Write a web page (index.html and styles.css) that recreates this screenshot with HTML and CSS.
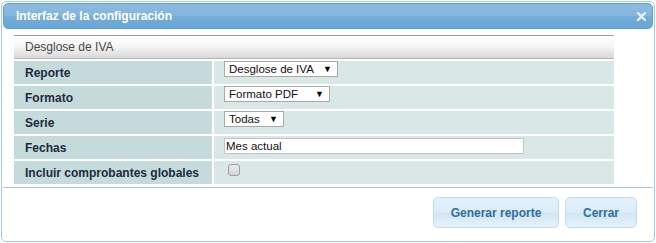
FILE: index.html
```html
<!DOCTYPE html>
<html>
<head>
    <title>Interfaz de la configuración</title>
    <link rel="stylesheet" href="styles.css">
</head>
<body>
    <div class="dialog">
        <div class="titlebar">
            <span class="title">Interfaz de la configuración</span>
            <span class="close" title="Cerrar">
                <svg width="9" height="9" viewBox="0 0 9 9">
                    <path d="M1 1 L8 8 M8 1 L1 8" stroke="#e9f0f6" stroke-width="2.4" stroke-linecap="square"/>
                </svg>
            </span>
        </div>

        <div class="content">
            <div class="form">
                <div class="form-head">Desglose de IVA</div>

                <div class="label">Reporte</div>
                <div class="value">
                    <div class="select w-reporte">
                        <select>
                            <option>Desglose de IVA</option>
                        </select>
                    </div>
                </div>

                <div class="label">Formato</div>
                <div class="value">
                    <div class="select w-formato">
                        <select>
                            <option>Formato PDF</option>
                            <option>Formato Excel</option>
                        </select>
                    </div>
                </div>

                <div class="label">Serie</div>
                <div class="value">
                    <div class="select w-serie">
                        <select>
                            <option>Todas</option>
                        </select>
                    </div>
                </div>

                <div class="label">Fechas</div>
                <div class="value">
                    <input class="text" type="text" value="Mes actual">
                </div>

                <div class="label">Incluir comprobantes globales</div>
                <div class="value">
                    <input class="check" type="checkbox">
                </div>
            </div>
        </div>

        <div class="buttonpane">
            <button class="btn-generar">Generar reporte</button>
            <button class="btn-cerrar">Cerrar</button>
        </div>
    </div>
</body>
</html>
```

FILE: styles.css
```css
body {
    margin: 0;
    font-family: "Liberation Sans", Arial, sans-serif;
    background: #ffffff;
}
.dialog {
    box-sizing: border-box;
    width: 654px;
    height: 241px;
    margin: 1px 0 0 1px;
    padding: 1px;
    border: 1px solid #a6c9e2;
    border-radius: 5px;
    background: #fff;
}
.titlebar {
    box-sizing: border-box;
    height: 26px;
    display: flex;
    align-items: center;
    justify-content: space-between;
    padding: 0 6px 0 12px;
    border: 1px solid #5a9fd6;
    border-radius: 5px;
    background: linear-gradient(#8dbbdf, #84b5dc 50%, #76acd8 52%, #6aa5d3);
    color: #fff;
    font-size: 12px;
    font-weight: bold;
}
.close {
    display: flex;
    width: 9px;
    height: 9px;
}
.content {
    padding: 6px 0 3px 11px;
}
.form {
    width: 600px;
    display: grid;
    grid-template-columns: 198px 1fr;
    gap: 2px;
}
.form-head {
    grid-column: 1 / 3;
    box-sizing: border-box;
    height: 24px;
    line-height: 22px;
    padding-left: 11px;
    border-top: 1px solid #9d9d9d;
    border-bottom: 1px solid #b4b4b4;
    background: linear-gradient(#ffffff, #f6f6f6 45%, #d9d9d9);
    color: #474747;
    font-size: 12px;
}
.label {
    height: 23px;
    line-height: 24px;
    padding-left: 11px;
    background: #c5dadb;
    color: #1e2a3c;
    font-size: 12px;
    font-weight: bold;
}
.value {
    height: 23px;
    padding-left: 10px;
    background: #d9e7e7;
}
.select {
    position: relative;
    box-sizing: border-box;
    height: 16px;
    border: 1px solid #a9a9a9;
    background: #fff;
}
.select select {
    appearance: none;
    display: block;
    width: 100%;
    height: 14px;
    line-height: 14px;
    border: none;
    padding: 0 0 0 4px;
    margin: 0;
    background: transparent;
    font-family: "Liberation Sans", Arial, sans-serif;
    font-size: 11.5px;
    color: #111;
    outline: none;
}
.select::after {
    content: "\25BC";
    position: absolute;
    right: 5px;
    top: 0;
    font-size: 9px;
    line-height: 14px;
    color: #000;
    pointer-events: none;
}
.w-reporte { width: 114px; }
.w-formato { width: 106px; }
.w-serie { width: 60px; }
.text {
    box-sizing: border-box;
    width: 300px;
    height: 16px;
    margin: 0;
    padding: 0 1px;
    border: 1px solid #c4c4c4;
    font-family: "Liberation Sans", Arial, sans-serif;
    font-size: 11.5px;
    color: #111;
}
.check {
    appearance: none;
    box-sizing: border-box;
    width: 12px;
    height: 12px;
    margin: 3px 0 0 4px;
    border: 1px solid #a0a0a0;
    border-radius: 3px;
    background: linear-gradient(#ececec, #d4d4d4);
}
.buttonpane {
    display: flex;
    justify-content: flex-end;
    gap: 6px;
    padding: 9px 16px 0 0;
    border-top: 1px solid #a6c9e2;
}
button {
    height: 31px;
    padding: 0;
    border: 1px solid #c5dbec;
    border-radius: 5px;
    background: linear-gradient(#e4f1fb, #dbecfa 50%, #d0e5f5 52%, #e6f2fc);
    color: #2e6e9e;
    font-family: "Liberation Sans", Arial, sans-serif;
    font-size: 12px;
    font-weight: bold;
    cursor: pointer;
}
.btn-generar { width: 126px; }
.btn-cerrar { width: 72px; }
```
